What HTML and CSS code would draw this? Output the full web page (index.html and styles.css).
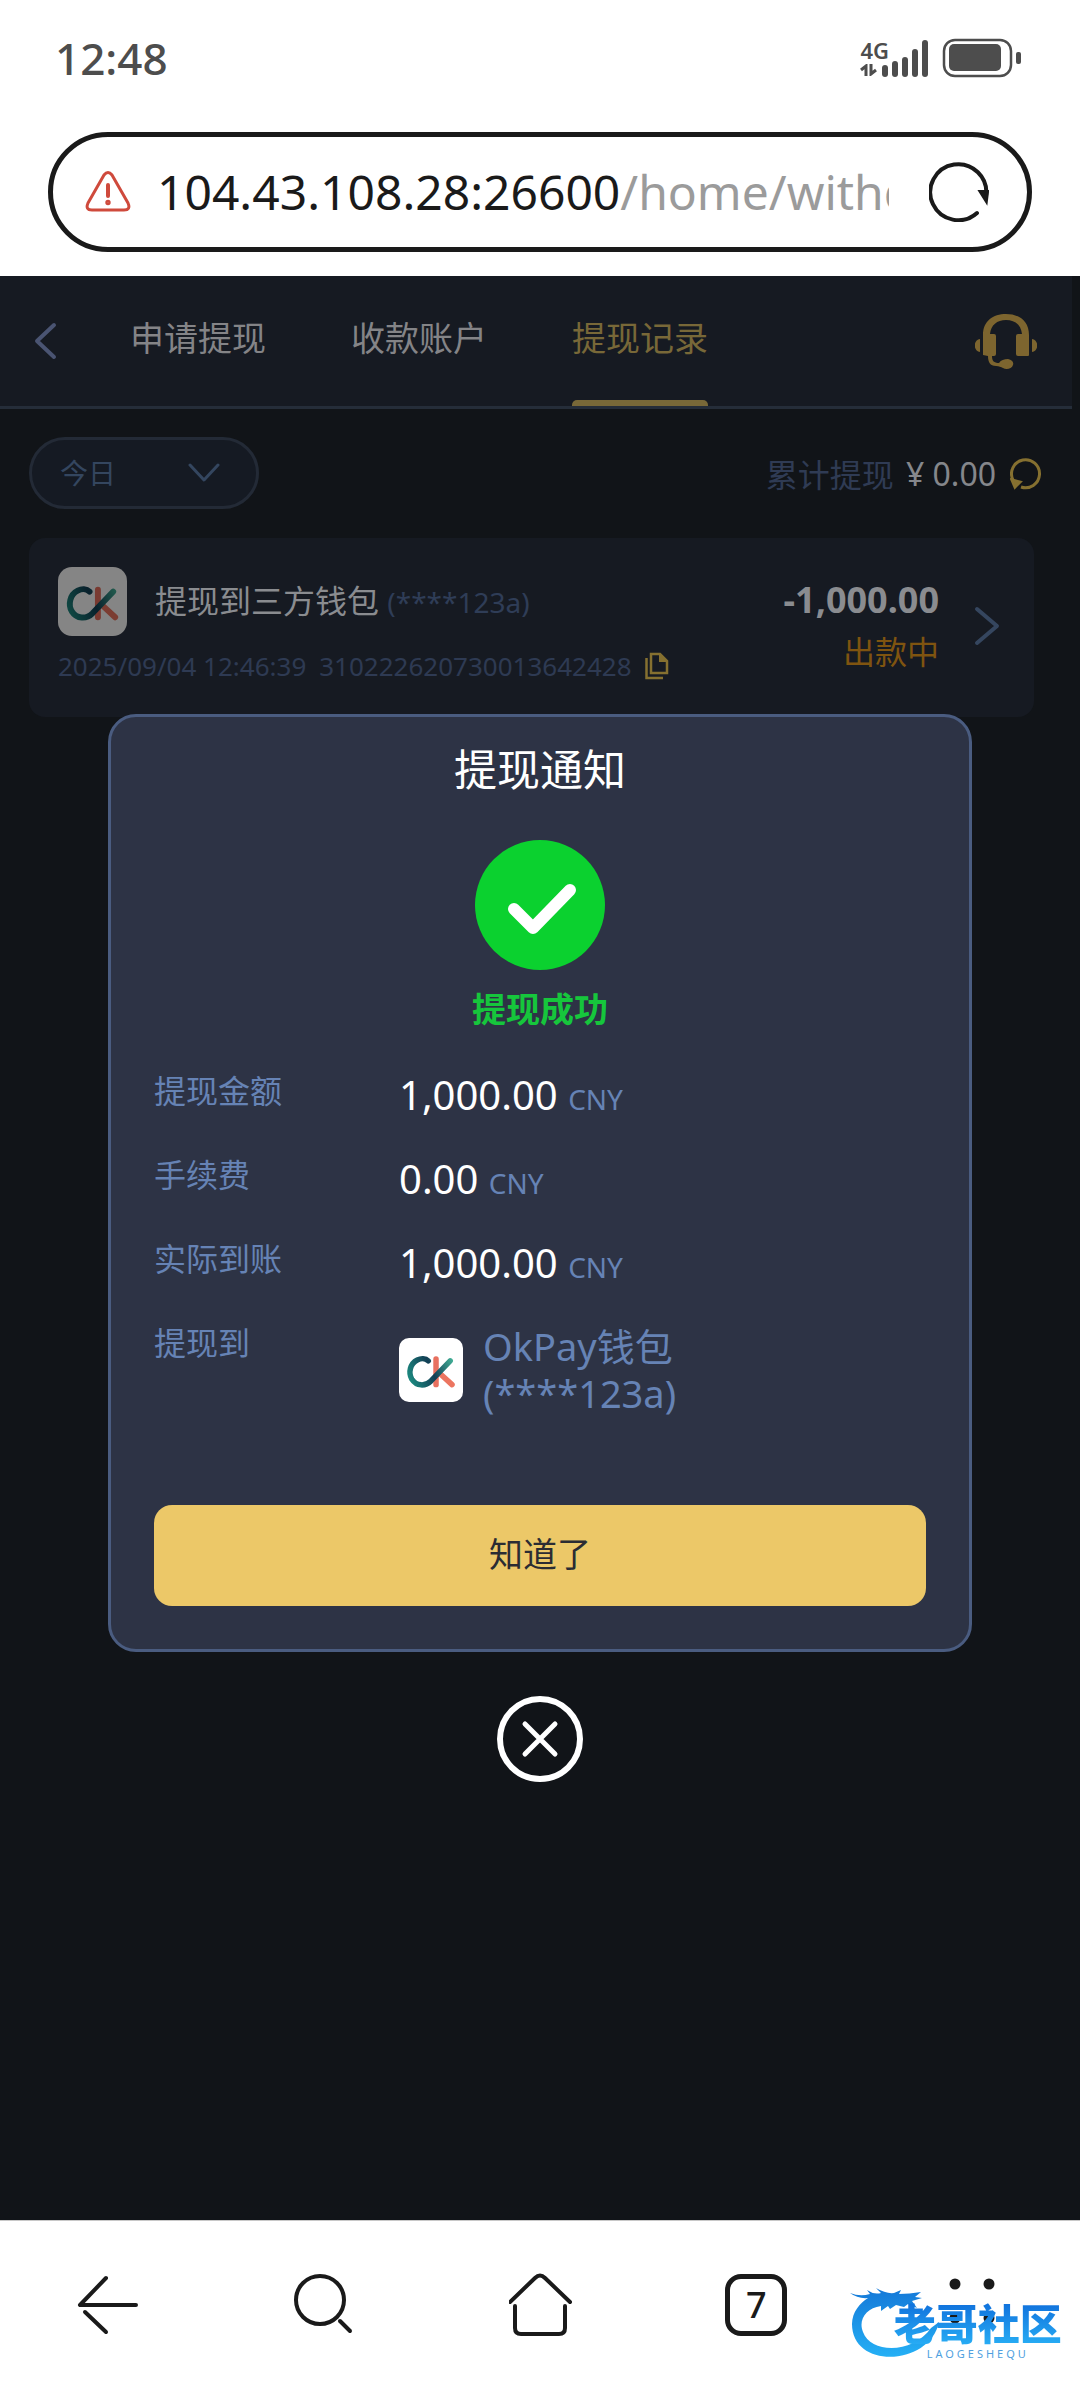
FILE: index.html
```html
<!DOCTYPE html>
<html lang="zh-CN">
<head>
<meta charset="utf-8">
<meta name="viewport" content="width=device-width, initial-scale=1">
<title>提现记录</title>
<link rel="stylesheet" href="styles.css">
</head>
<body>
<svg class="defs" width="0" height="0" aria-hidden="true">
  <defs>
    <linearGradient id="tealStroke" gradientUnits="userSpaceOnUse" x1="10" y1="44" x2="60" y2="22">
      <stop offset="0" stop-color="#1c8a80"/>
      <stop offset="0.5" stop-color="#123f55"/>
      <stop offset="1" stop-color="#45b79b"/>
    </linearGradient>
    <symbol id="okpay" viewBox="0 0 70 70">
      <g fill="none" stroke-width="6" stroke-linecap="round" stroke-linejoin="round">
        <path d="M40.500 23v28" stroke="#e8705f"/>
        <path d="M45 39l13 12" stroke="#ec7560"/>
        <path d="M32 25c-3-3-8-3-12-1-8 4-10 14-6 21 5 8 15 8 21 2l21-22" stroke="url(#tealStroke)"/>
      </g>
    </symbol>
  </defs>
</svg>

<header class="status-bar">
  <time class="clock">12:48</time>
  <div class="status-icons">
    <div class="network">
      <span class="network-type">4G</span>
      <svg width="18" height="12" viewBox="0 0 18 12" fill="none" stroke="#4d4d4d" stroke-width="3"><path d="M6 12V2L1 6M11 0v10l5-4"/></svg>
    </div>
    <svg class="signal" width="48" height="37" viewBox="0 0 48 37" fill="#4d4d4d">
      <rect x="1" y="25" width="6" height="12" rx="3"/><rect x="11" y="21" width="6" height="16" rx="3"/><rect x="21" y="17" width="6" height="20" rx="3"/><rect x="31" y="9" width="6" height="28" rx="3"/><rect x="41" y="0" width="6" height="37" rx="3"/>
    </svg>
    <svg width="80" height="40" viewBox="0 0 80 40" fill="#4d4d4d">
      <rect x="2" y="2" width="67" height="36" rx="11" fill="none" stroke="#4d4d4d" stroke-width="2.500"/><rect x="7" y="6" width="52" height="27" rx="5"/><rect x="74" y="14" width="5" height="12" rx="2"/>
    </svg>
  </div>
</header>

<div class="address-wrap">
  <div class="address-bar">
    <svg class="warning" width="46" height="44" viewBox="0 0 46 44" fill="none" stroke="#cf4a3c" stroke-width="3" stroke-linecap="round" stroke-linejoin="round">
      <path d="M19 5q4-5 8 0l16 28q3 7-4 7H7q-7 0-4-7z"/><path d="M23 15v11" stroke-width="4"/><circle cx="23" cy="32.500" r="1.200"/>
    </svg>
    <button class="url" type="button"><span class="host">104.43.108.28:26600</span>/home/withdraw</button>
    <button class="icon-button" type="button" aria-label="刷新页面">
      <svg width="60" height="60" viewBox="0 0 60 60" fill="none" stroke="#1a1a1a" stroke-width="4" stroke-linecap="round">
        <path d="M48 51A28 28 0 1 1 57 34"/><path d="M52 30l5 8 1-8z" fill="#1a1a1a"/>
      </svg>
    </button>
  </div>
</div>

<main class="app">
  <div class="page">
    <div class="page-header">
      <button class="icon-button" type="button" aria-label="返回">
        <svg width="24" height="38" viewBox="0 0 24 38" fill="none" stroke="#4a5472" stroke-width="4" stroke-linecap="round" stroke-linejoin="round"><path d="M21 3L4 19l17 16"/></svg>
      </button>
      <nav class="tabs">
        <a class="tab" href="#apply">申请提现</a>
        <a class="tab" href="#accounts">收款账户</a>
        <a class="tab tab-active" href="#records" aria-current="page">提现记录</a>
      </nav>
      <button class="icon-button" type="button" aria-label="客服">
        <svg width="62" height="56" viewBox="0 0 62 56" fill="#7d652f">
          <path d="M8 42V22C8 8 18 1 31 1s23 7 23 21v20q0 1-1 1H43q-2 0-2-2V23q0-2 2-2h4C46 12 40 7 31 7S16 12 15 21h4q2 0 2 2v18q0 2-2 2h-2c0 5 2 7 7 7 2-3 5-4 9-4 4 1 6 3 5 6-1 4-7 5-10 3-2-1-4-2-7-2-6 0-8-4-8-10z"/>
          <path d="M5 26v13c-7-1-7-12 0-13zM57 26v13c7-1 7-12 0-13z"/>
        </svg>
      </button>
    </div>

    <div class="toolbar">
      <div class="range">
        <select class="range-select" aria-label="日期范围"><option>今日</option><option>昨日</option></select>
        <svg width="32" height="20" viewBox="0 0 32 20" fill="none" stroke="#34465f" stroke-width="3" stroke-linecap="round" stroke-linejoin="round"><path d="M2 2l14 15L30 2"/></svg>
      </div>
      <div class="total">
        <span class="total-label">累计提现</span>
        <span class="total-value">¥ 0.00</span>
        <button class="icon-button" type="button" aria-label="刷新金额">
          <svg width="32" height="34" viewBox="0 0 32 34" fill="none" stroke="#857030" stroke-width="3"><path d="M11 31A14 14 0 1 0 3 24"/><path d="M2 24l8 2-5 5z" fill="#857030"/></svg>
        </button>
      </div>
    </div>

    <article class="record">
      <div class="record-main">
        <div class="record-title">
          <svg class="record-logo" viewBox="0 0 70 70"><use href="#okpay"/></svg>
          <h2 class="record-name">提现到三方钱包 <span class="record-account">(****123a)</span></h2>
        </div>
        <div class="record-meta">
          <span>2025/09/04 12:46:39</span>
          <span>310222620730013642428</span>
          <button class="icon-button" type="button" aria-label="复制单号">
            <svg width="24" height="28" viewBox="0 0 24 28" fill="none" stroke="#857030" stroke-width="2.500"><path d="M6 2h9l7 7v12H6zM1.500 6v20H18"/><path d="M14 2v8h8z" fill="#857030" stroke="none"/></svg>
          </button>
        </div>
      </div>
      <div class="record-result">
        <strong class="record-amount">-1,000.00</strong>
        <span class="record-state">出款中</span>
      </div>
      <svg width="26" height="40" viewBox="0 0 26 40" fill="none" stroke="#35465f" stroke-width="4" stroke-linecap="round" stroke-linejoin="round"><path d="M3 3l20 17L3 37"/></svg>
    </article>
  </div>

  <div class="overlay">
    <section class="modal" role="dialog" aria-labelledby="notice-title">
      <h1 class="modal-title" id="notice-title">提现通知</h1>
      <svg class="success-icon" width="130" height="130" viewBox="0 0 130 130"><circle cx="65" cy="65" r="65" fill="#0bd12f"/><path d="M39 69l19 19 37-38" fill="none" stroke="#fff" stroke-width="12" stroke-linecap="round" stroke-linejoin="round"/></svg>
      <p class="success-text">提现成功</p>
      <dl class="details">
        <div class="detail"><dt>提现金额</dt><dd>1,000.00 <span class="currency">CNY</span></dd></div>
        <div class="detail"><dt>手续费</dt><dd>0.00 <span class="currency">CNY</span></dd></div>
        <div class="detail"><dt>实际到账</dt><dd>1,000.00 <span class="currency">CNY</span></dd></div>
        <div class="detail"><dt>提现到</dt><dd class="wallet"><svg class="wallet-logo" viewBox="0 0 70 70"><use href="#okpay"/></svg><span>OkPay钱包<br>(****123a)</span></dd></div>
      </dl>
      <button class="confirm" type="button">知道了</button>
    </section>
    <button class="icon-button" type="button" aria-label="关闭">
      <svg width="86" height="86" viewBox="0 0 86 86" fill="none" stroke="#fff" stroke-width="6" stroke-linecap="round"><circle cx="43" cy="43" r="40"/><path d="M28 28l30 30M58 28L28 58" stroke-width="5"/></svg>
    </button>
  </div>
</main>

<footer class="browser-nav">
  <button class="icon-button" type="button" aria-label="后退">
    <svg width="64" height="64" viewBox="0 0 64 64" fill="none" stroke="#1a1a1a" stroke-width="4" stroke-linecap="round" stroke-linejoin="round"><path d="M30 5L4 32h56"/><path d="M9 39l21 20"/></svg>
  </button>
  <button class="icon-button" type="button" aria-label="搜索">
    <svg width="64" height="64" viewBox="0 0 64 64" fill="none" stroke="#1a1a1a" stroke-width="4" stroke-linecap="round"><circle cx="27" cy="27" r="24"/><path d="M47 48l10 10"/></svg>
  </button>
  <button class="icon-button" type="button" aria-label="主页">
    <svg width="64" height="64" viewBox="0 0 64 64" fill="none" stroke="#1a1a1a" stroke-width="4" stroke-linecap="round" stroke-linejoin="round"><path d="M1 29L26 5q5-5 10 0l25 24"/><path d="M6 33v22q0 6 6 6h38q6 0 6-6V33"/></svg>
  </button>
  <button class="tab-count" type="button" aria-label="标签页">7</button>
  <div class="menu">
    <button class="icon-button" type="button" aria-label="菜单">
      <svg width="64" height="64" viewBox="0 0 64 64" fill="#1a1a1a"><circle cx="15" cy="14" r="5.500"/><circle cx="49" cy="14" r="5.500"/><circle cx="15" cy="48" r="5.500"/><circle cx="49" cy="48" r="5.500"/></svg>
    </button>
    <div class="watermark">
      <svg width="92" height="72" viewBox="0 0 92 72">
        <defs><linearGradient id="blue" x1="0" y1="0" x2="0" y2="1"><stop offset="0" stop-color="#1478d8"/><stop offset="1" stop-color="#25b0f5"/></linearGradient></defs>
        <path fill="url(#blue)" d="M0 5q10 4 20 1l-3-4q7 5 14 3l-5-5q10 6 18 5l7-3-2 4q10 0 22-2l-6 5 7 1-10 3 5 7-9-4-4 3-8-2-6 4-2-3-7 5v-5C16 20 8 32 13 44c8 22 50 22 68-4l8-6C80 78 2 82 2 36 2 24 10 15 18 10Q8 11 0 5z"/>
      </svg>
      <div class="watermark-text"><span class="watermark-name">老哥社区</span><span class="watermark-latin">LAOGESHEQU</span></div>
    </div>
  </div>
</footer>
</body>
</html>
```

FILE: styles.css
```css
* {
  box-sizing: border-box;
}

body {
  margin: 0;
  min-height: 100vh;
  display: flex;
  flex-direction: column;
  background: #fff;
  font-family: "Noto Sans", "Noto Sans CJK SC", sans-serif;
}

h1, h2, p, dl, dd {
  margin: 0;
}

svg {
  display: block;
  flex-shrink: 0;
}

button {
  border: 0;
  padding: 0;
  background: none;
  color: inherit;
  font-family: inherit;
  cursor: pointer;
}

.defs {
  position: absolute;
}

.icon-button {
  flex-shrink: 0;
}

/* Phone status bar */
.status-bar {
  display: flex;
  justify-content: space-between;
  align-items: center;
  height: 116px;
  padding: 0 58px 0 55px;
  color: #4d4d4d;
}

.clock {
  font-size: 44px;
  font-weight: 500;
}

.status-icons {
  display: flex;
  align-items: center;
}

.network {
  display: flex;
  flex-direction: column;
  gap: 4px;
  margin-right: -8px;
}

.network-type {
  font-size: 22px;
  line-height: 20px;
  font-weight: 600;
}

.signal {
  margin-right: 13px;
}

/* Browser address bar */
.address-wrap {
  padding: 16px 48px 24px;
}

.address-bar {
  display: flex;
  align-items: center;
  height: 120px;
  padding: 0 38px 0 32px;
  border: 5px solid #1a1a1a;
  border-radius: 60px;
}

.url {
  flex: 1;
  min-width: 0;
  margin: 0 40px 0 26px;
  overflow: hidden;
  color: #9b9b9b;
  font-size: 48px;
  line-height: 64px;
  text-align: left;
  white-space: nowrap;
}

.host {
  color: #1a1a1a;
}

/* Dimmed page with the dialog stacked over it */
.app {
  flex: 1;
  display: grid;
  background: #111418;
}

.page,
.overlay {
  grid-area: 1 / 1;
}

.page-header {
  display: flex;
  align-items: center;
  height: 133px;
  margin-right: 8px;
  padding: 0 35px 0 33px;
  background: #161a22;
  border-bottom: 3px solid #252d39;
}

.tabs {
  flex: 1;
  align-self: stretch;
  display: flex;
  gap: 85px;
  padding-left: 73px;
}

.tab {
  display: flex;
  align-items: center;
  padding-bottom: 10px;
  color: #848487;
  font-size: 34px;
  text-decoration: none;
}

.tab-active {
  position: relative;
  color: #786838;
}

.tab-active::after {
  content: "";
  position: absolute;
  right: 0;
  bottom: 0;
  left: 0;
  height: 6px;
  border-radius: 5px 5px 0 0;
  background: #786838;
}

.toolbar {
  display: flex;
  justify-content: space-between;
  align-items: center;
  padding: 28px 38px 29px 29px;
}

.range {
  display: flex;
  align-items: center;
  width: 230px;
  height: 72px;
  padding: 0 36px 0 28px;
  border: 3px solid #232a36;
  border-radius: 36px;
  background: #151a23;
}

.range-select {
  flex: 1;
  appearance: none;
  border: 0;
  padding: 0;
  background: none;
  color: #34465f;
  font-family: inherit;
  font-size: 28px;
}

.total {
  display: flex;
  align-items: center;
  font-size: 32px;
}

.total-label {
  color: #2f3b54;
}

.total-value {
  margin: 0 14px 0 12px;
  color: #85878b;
}

.record {
  display: flex;
  align-items: center;
  margin: 0 46px 0 29px;
  padding: 29px 34px 33px 29px;
  border-radius: 16px;
  background: #161a22;
}

.record-main {
  flex: 1;
}

.record-title {
  display: flex;
  align-items: center;
  gap: 28px;
}

.record-logo {
  width: 69px;
  height: 69px;
  border-radius: 14px;
  background: #fff;
  filter: brightness(0.52);
}

.record-name {
  color: #8a8c90;
  font-size: 32px;
  font-weight: 400;
  line-height: 48px;
}

.record-account {
  color: #2f3d57;
  font-size: 28px;
}

.record-meta {
  display: flex;
  align-items: center;
  gap: 13px;
  margin-top: 12px;
  color: #2e3a53;
  font-size: 26px;
  line-height: 36px;
}

.record-result {
  display: flex;
  flex-direction: column;
  align-items: flex-end;
  margin-right: 35px;
  line-height: 52px;
}

.record-amount {
  color: #8a8c90;
  font-size: 36px;
}

.record-state {
  color: #7f5410;
  font-size: 32px;
}

/* Withdrawal notice */
.overlay {
  position: relative;
  display: flex;
  flex-direction: column;
  align-items: center;
  justify-content: center;
  gap: 44px;
}

.modal {
  display: flex;
  flex-direction: column;
  width: 80%;
  padding: 23px 43px 43px;
  border: 3px solid #4a5c80;
  border-radius: 28px;
  background: #2d3345;
}

.modal-title {
  color: #fff;
  font-size: 43px;
  font-weight: 400;
  line-height: 60px;
  text-align: center;
}

.success-icon {
  align-self: center;
  margin: 40px 0 17px;
}

.success-text {
  color: #16c63c;
  font-size: 34px;
  font-weight: 700;
  line-height: 44px;
  text-align: center;
}

.details {
  display: flex;
  flex-direction: column;
  gap: 28px;
  margin: 36px 0 88px;
}

.detail {
  display: grid;
  grid-template-columns: 245px 1fr;
  color: #6683b5;
}

.detail dt {
  font-size: 32px;
  line-height: 48px;
}

.detail dd {
  color: #fff;
  font-size: 40px;
  line-height: 56px;
}

.detail .currency {
  color: #6683b5;
  font-size: 28px;
  line-height: 40px;
}

.detail .wallet {
  display: flex;
  align-items: center;
  gap: 20px;
  padding-top: 4px;
  color: #6683b5;
  font-size: 38px;
  line-height: 47px;
}

.wallet-logo {
  width: 64px;
  height: 64px;
  border-radius: 10px;
  background: #fff;
}

.confirm {
  height: 101px;
  padding-bottom: 6px;
  border-radius: 18px;
  background: #ecc868;
  color: #2b2c33;
  font-size: 34px;
}

/* Browser bottom navigation */
.browser-nav {
  display: flex;
  justify-content: space-around;
  align-items: center;
  height: 168px;
  border-top: 1px solid #c8c8c8;
}

.tab-count {
  width: 62px;
  height: 62px;
  border: 5px solid #1a1a1a;
  border-radius: 16px;
  color: #1a1a1a;
  font-size: 36px;
  font-weight: 500;
  line-height: 46px;
}

.menu {
  position: relative;
}

.watermark {
  position: absolute;
  top: 18px;
  right: -58px;
  display: flex;
}

.watermark-text {
  display: flex;
  flex-direction: column;
  align-items: center;
  gap: 2px;
  margin-left: -48px;
  padding-top: 14px;
}

.watermark-name {
  background: linear-gradient(#1070dc, #28aef5);
  background-clip: text;
  color: transparent;
  font-size: 42px;
  font-weight: 900;
  line-height: 44px;
  white-space: nowrap;
}

.watermark-latin {
  color: #4f9fe0;
  font-size: 11px;
  line-height: 12px;
  letter-spacing: 3px;
}
```
